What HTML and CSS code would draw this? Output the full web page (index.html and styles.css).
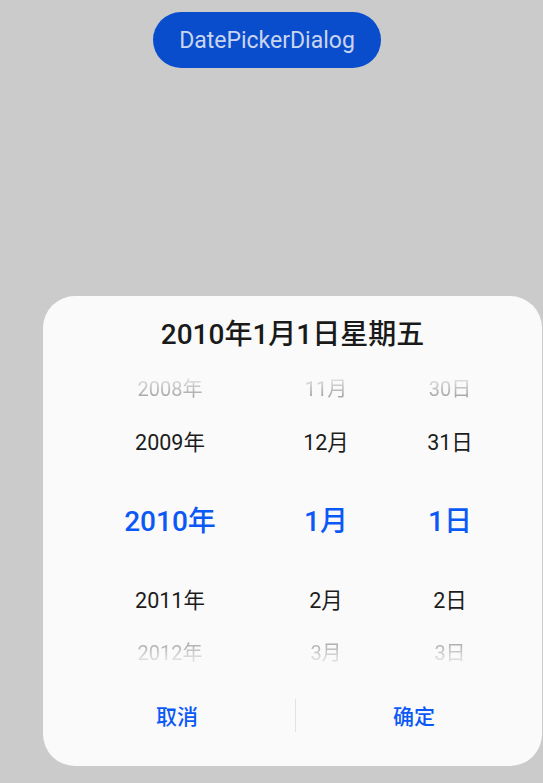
FILE: index.html
```html
<!DOCTYPE html>
<html lang="zh">
<head>
<meta charset="utf-8">
<link rel="stylesheet" href="styles.css">
</head>
<body>
<div class="page">
  <button class="open-btn">DatePickerDialog</button>
  <div class="dialog">
    <div class="title">2010年1月1日星期五</div>
    <div class="picker">
      <div class="cell far top">2008年</div>
      <div class="cell far top">11月</div>
      <div class="cell far top">30日</div>
      <div class="cell near">2009年</div>
      <div class="cell near">12月</div>
      <div class="cell near">31日</div>
      <div class="cell sel">2010年</div>
      <div class="cell sel">1月</div>
      <div class="cell sel">1日</div>
      <div class="cell near">2011年</div>
      <div class="cell near">2月</div>
      <div class="cell near">2日</div>
      <div class="cell far bottom">2012年</div>
      <div class="cell far bottom">3月</div>
      <div class="cell far bottom">3日</div>
    </div>
    <div class="actions">
      <div class="action">取消</div>
      <div class="divider"></div>
      <div class="action">确定</div>
    </div>
  </div>
</div>
</body>
</html>
```
FILE: styles.css
```css
* { box-sizing: border-box; }
html, body {
  margin: 0;
  padding: 0;
  background: #cbcbcb;
  font-family: "Roboto", "Noto Sans CJK SC", sans-serif;
}
.page {
  width: 543px;
  height: 783px;
  display: flex;
  flex-direction: column;
  align-items: flex-start;
  overflow: hidden;
}
.open-btn {
  margin: 12px 0 0 153px;
  width: 228px;
  height: 56px;
  border: none;
  border-radius: 28px;
  background: #0a4dcc;
  color: #c9d5ef;
  font-family: "Roboto", "Noto Sans", sans-serif;
  font-size: 23px;
  font-weight: 400;
  padding: 0;
}
.dialog {
  margin: 228px 0 0 43px;
  width: 499px;
  height: 470px;
  background: #fafafa;
  border-radius: 32px;
  display: flex;
  flex-direction: column;
}
.title {
  height: 64px;
  padding-top: 22px;
  line-height: 34px;
  text-align: center;
  font-size: 28px;
  font-weight: 500;
  color: #1a1a1a;
}
.picker {
  display: grid;
  grid-template-columns: 206px 106px 142px;
  grid-template-rows: 54px 52px 106px 52px 54px;
  padding: 0 24px;
  height: 318px;
}
.cell {
  display: flex;
  align-items: center;
  justify-content: center;
}
.far {
  font-size: 20px;
  color: #9a9a9a;
}
.far.top {
  -webkit-mask-image: linear-gradient(to bottom, rgba(0,0,0,0.3) 20px, rgba(0,0,0,0.85) 36px);
  mask-image: linear-gradient(to bottom, rgba(0,0,0,0.3) 20px, rgba(0,0,0,0.85) 36px);
}
.far.bottom {
  -webkit-mask-image: linear-gradient(to top, rgba(0,0,0,0.3) 20px, rgba(0,0,0,0.85) 36px);
  mask-image: linear-gradient(to top, rgba(0,0,0,0.3) 20px, rgba(0,0,0,0.85) 36px);
}
.near {
  font-size: 21.5px;
  color: #1c1c1c;
}
.sel {
  font-size: 28px;
  font-weight: 500;
  color: #0a59f7;
}
.actions {
  height: 74px;
  display: flex;
  align-items: center;
  padding: 0 10px 0 16px;
}
.action {
  flex: 1;
  text-align: center;
  font-size: 21px;
  font-weight: 500;
  color: #0a59f7;
}
.divider {
  width: 1px;
  height: 33px;
  background: #e2e2e2;
}
```
